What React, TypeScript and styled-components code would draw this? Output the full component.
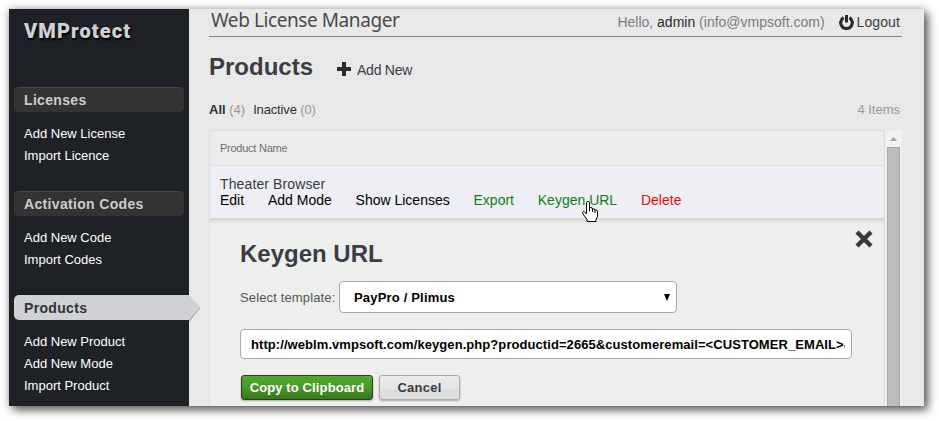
import React from "react";
import styled, { createGlobalStyle, css } from "styled-components";

const Global = createGlobalStyle`
  *, *::before, *::after { box-sizing: border-box; }
  body { margin: 0; background: #fff; font: 14px/16px "Liberation Sans", Arial, sans-serif; overflow: hidden; }
  a { color: inherit; text-decoration: none; }
`;

const Page = styled.div`
  height: 421px;
  padding: 9px 15px 15px 9px;
`;

const Window = styled.div`
  display: flex;
  height: 397px;
  box-shadow: 4px 4px 9px rgba(0, 0, 0, 0.6), 0 0 8px rgba(0, 0, 0, 0.25);
`;

const Sidebar = styled.nav`
  width: 180px;
  flex: none;
  background: #1e2126;
`;

const Logo = styled.div`
  height: 78px;
  padding: 10px 0 0 15px;
  color: #d0d1d4;
  font: 900 20px/24px Roboto, sans-serif;
  letter-spacing: 1.1px;
  text-shadow: 1px 2px 2px #000;
`;

const Section = styled.section`
  padding-bottom: 25px;
`;

const SectionTitle = styled.h3<{ $active?: boolean }>`
  position: relative;
  margin: 0 5px 10px;
  height: 25px;
  padding-left: 10px;
  border-radius: 5px;
  background: #333;
  border-top: 1px solid #464646;
  color: #ccc;
  font-size: 14px;
  line-height: 24px;
  letter-spacing: 0.33px;
  ${(p) =>
    p.$active &&
    css`
      margin-right: 0;
      border-radius: 5px 0 0 5px;
      border-top-color: #d0d1d5;
      background: #d0d1d5;
      color: #333;
    `}
`;

const Pointer = styled.svg`
  position: absolute;
  left: 100%;
  top: -1px;
`;

const SideLink = styled.a`
  display: block;
  height: 22px;
  padding: 1px 0 0 15px;
  color: #fff;
  font-size: 13px;
  line-height: 22px;
`;

const Main = styled.main`
  flex: 1;
  min-width: 0;
  padding: 0 22px 0 20px;
  background: linear-gradient(135deg, #f0f0f0 0 13%, #e6e6e6 13% 50%, #f0f0f0 50% 63%, #e6e6e6 63%) 0 0 / 4px 4px;
  display: flex;
  flex-direction: column;
`;

const TopBar = styled.header`
  display: flex;
  justify-content: space-between;
  height: 28px;
  border-bottom: 1px solid #848484;
`;

const AppName = styled.div`
  padding-left: 2px;
  color: #4b4b4b;
  font: 19px/23px "Noto Sans", sans-serif;
  letter-spacing: -0.42px;
`;

const Account = styled.div`
  display: flex;
  align-items: center;
  height: 26px;
  padding-right: 2px;
  color: #7b7b80;
  b { color: #28282c; font-weight: normal; }
`;

const Logout = styled.a`
  display: flex;
  align-items: center;
  gap: 3px;
  margin-left: 14px;
  color: #3c3c44;
  letter-spacing: 0.1px;
`;

const TitleRow = styled.div`
  display: flex;
  align-items: center;
  height: 60px;
`;

const Title = styled.h1`
  margin: 0;
  color: #3b3c45;
  font-size: 24px;
  line-height: 28px;
`;

const AddNew = styled.a`
  display: flex;
  align-items: center;
  gap: 5px;
  margin: 5px 0 0 24px;
  color: #3b3c45;
  letter-spacing: -0.25px;
  svg { margin-top: -2px; }
`;

const Filters = styled.div`
  display: flex;
  align-items: center;
  height: 24px;
  margin-bottom: 9px;
  padding: 2px 2px 0 0;
  color: #999;
  font-size: 13px;
`;

const Filter = styled.span<{ $bold?: boolean }>`
  margin-right: 8px;
  letter-spacing: ${(p) => (p.$bold ? 0 : -0.15)}px;
  a { color: #30303a; font-weight: ${(p) => (p.$bold ? "bold" : "normal")}; }
`;

const Count = styled.span`
  margin-left: auto;
`;

const ListArea = styled.div`
  display: flex;
  flex: 1;
  min-height: 0;
`;

const Table = styled.div`
  flex: 1;
  min-width: 0;
  border: 1px solid #dcdcdc;
  border-bottom: 0;
  background: #edefec;
  overflow: hidden;
`;

const HeadRow = styled.div`
  height: 35px;
  padding-left: 10px;
  border-bottom: 1px solid #dcdcdc;
  background: #ececec;
  color: #707070;
  font-size: 11px;
  line-height: 34px;
  letter-spacing: -0.25px;
`;

const ProductRow = styled.div`
  height: 53px;
  padding: 10px 0 0 10px;
  border-bottom: 1px solid #d9d9dc;
  background: #eeeff4;
  color: #3b3b42;
`;

const ProductName = styled.div`
  letter-spacing: 0.12px;
`;

const Actions = styled.div`
  display: flex;
  gap: 23.8px;
`;

const Action = styled.a<{ $tone?: string }>`
  position: relative;
  color: ${(p) => p.$tone ?? "#000"};
`;

const Cursor = styled.svg`
  position: absolute;
  left: 43px;
  top: 8px;
`;

const Panel = styled.div`
  height: 200px;
  padding: 21px 10px 0 30px;
  background: linear-gradient(#cfd0cf, #e4e6e3 2px, #edefec 7px);
`;

const PanelHead = styled.div`
  display: flex;
  justify-content: space-between;
  height: 41px;
`;

const Close = styled.svg`
  margin-top: -11px;
`;

const Field = styled.div`
  display: flex;
  align-items: center;
  color: #55555a;
`;

const Label = styled.span`
  width: 99px;
  padding-top: 2px;
  font-size: 13px;
  letter-spacing: 0.14px;
  white-space: nowrap;
`;

const Select = styled.div`
  display: flex;
  align-items: center;
  justify-content: space-between;
  width: 338px;
  height: 32px;
  padding: 2px 6px 0 14px;
  border: 1px solid #aaa;
  border-radius: 4px;
  background: #fff;
  color: #000;
  font-size: 13px;
  font-weight: bold;
  letter-spacing: 0.18px;
  svg { margin-top: -2px; }
`;

const UrlField = styled.div`
  width: 612px;
  height: 30px;
  margin: 16px 0;
  padding: 0 6px 0 10px;
  border: 1px solid #aaa;
  border-radius: 4px;
  background: #fff;
  color: #000;
  font-size: 13px;
  font-weight: bold;
  line-height: 30px;
  letter-spacing: 0.07px;
`;

const UrlText = styled.div`
  overflow: hidden;
  white-space: nowrap;
`;

const Buttons = styled.div`
  display: flex;
  gap: 6px;
  padding-left: 1px;
`;

const Button = styled.button<{ $primary?: boolean }>`
  width: ${(p) => (p.$primary ? 132 : 81)}px;
  height: 25px;
  padding: 0;
  border: 1px solid ${(p) => (p.$primary ? "#2b3f22" : "#aaabac")};
  border-radius: 3px;
  background: ${(p) =>
    p.$primary ? "linear-gradient(#50a82c, #4b9c27 45%, #367619)" : "linear-gradient(#ececed, #e2e5e7 58%, #dcdcdd 62%, #dedede)"};
  box-shadow: 0 1px 2px rgba(0, 0, 0, 0.3);
  color: ${(p) => (p.$primary ? "#fff" : "#3b3b42")};
  font: bold 13px/23px "Liberation Sans", Arial, sans-serif;
  letter-spacing: ${(p) => (p.$primary ? 0.12 : 0.25)}px;
  white-space: nowrap;
`;

const Scrollbar = styled.div`
  width: 17px;
  flex: none;
  display: flex;
  flex-direction: column;
  padding: 0 2px;
  background: #f1f1f1;
`;

const UpArrow = styled.svg`
  flex: none;
`;

const Thumb = styled.div`
  flex: 1;
  border: 1px solid #a8a8a8;
  border-bottom: 0;
  background: #bcbcbc;
`;

const sections = [
  { title: "Licenses", links: ["Add New License", "Import Licence"] },
  { title: "Activation Codes", links: ["Add New Code", "Import Codes"] },
  { title: "Products", links: ["Add New Product", "Add New Mode", "Import Product"], active: true },
];

const actions = [
  { label: "Edit" },
  { label: "Add Mode" },
  { label: "Show Licenses" },
  { label: "Export", tone: "#108010" },
  { label: "Keygen URL", tone: "#108010", hovered: true },
  { label: "Delete", tone: "#f00a0a" },
];

export default function App() {
  return (
    <>
      <Global />
      <Page>
        <Window>
          <Sidebar>
            <Logo>VMProtect</Logo>
            {sections.map((s) => (
              <Section key={s.title}>
                <SectionTitle $active={s.active}>
                  {s.title}
                  {s.active && (
                    <Pointer width="12" height="27">
                      <path d="M0 2 11 13.5 0 27Z" fill="#a5a5a9" />
                      <path d="M0 0 11 12.5 0 25Z" fill="#d0d1d5" />
                    </Pointer>
                  )}
                </SectionTitle>
                {s.links.map((l) => (
                  <SideLink key={l}>{l}</SideLink>
                ))}
              </Section>
            ))}
          </Sidebar>
          <Main>
            <TopBar>
              <AppName>Web License Manager</AppName>
              <Account>
                <span>
                  Hello, <b>admin</b> (info@vmpsoft.com)
                </span>
                <Logout>
                  <svg width="15" height="15" viewBox="0 0 15 15" fill="none" stroke="#2b2b2b">
                    <path d="M4.600 2.700A5.800 5.800 0 1 0 10.400 2.700" strokeWidth="3.200" />
                    <path d="M7.500 0V7.500" strokeWidth="3" />
                  </svg>
                  Logout
                </Logout>
              </Account>
            </TopBar>
            <TitleRow>
              <Title>Products</Title>
              <AddNew>
                <svg width="15" height="14">
                  <path d="M5 0h4v5h5v4H9v5H5V9H0V5h5z" fill="#2b2b2b" />
                </svg>
                Add New
              </AddNew>
            </TitleRow>
            <Filters>
              <Filter $bold>
                <a>All</a> (4)
              </Filter>
              <Filter>
                <a>Inactive</a> (0)
              </Filter>
              <Count>4 Items</Count>
            </Filters>
            <ListArea>
              <Table>
                <HeadRow>Product Name</HeadRow>
                <ProductRow>
                  <ProductName>Theater Browser</ProductName>
                  <Actions>
                    {actions.map((a) => (
                      <Action key={a.label} $tone={a.tone}>
                        {a.label}
                        {a.hovered && (
                          <Cursor width="18" height="23" viewBox="0 0 18 23">
                            <path
                              d="M5.500 14V2.500q0-1 1.500-1t1.500 1V8l1-.5q2 0 2 1.500 2.500-.5 2.500 1 2.500-.5 2.500 1.500v5l-1.500 3v2h-9v-2l-4-5.500q-1-2.500.5-2.500 1 0 2 1.500zM8.500 8v3.500M11.500 9v3M14 10v3"
                              fill="#fff"
                              stroke="#000"
                            />
                          </Cursor>
                        )}
                      </Action>
                    ))}
                  </Actions>
                </ProductRow>
                <Panel>
                  <PanelHead>
                    <Title as="h2">Keygen URL</Title>
                    <Close width="20" height="20" viewBox="0 0 20 20">
                      <path d="M3 3l14 14M17 3l-14 14" stroke="#383838" strokeWidth="4.500" />
                    </Close>
                  </PanelHead>
                  <Field>
                    <Label>Select template:</Label>
                    <Select>
                      PayPro / Plimus
                      <svg width="6" height="7">
                        <path d="M0 0h6L3 7z" />
                      </svg>
                    </Select>
                  </Field>
                  <UrlField>
                    <UrlText>
                      {"http://weblm.vmpsoft.com/keygen.php?productid=2665&customeremail=<CUSTOMER_EMAIL>&"}
                    </UrlText>
                  </UrlField>
                  <Buttons>
                    <Button $primary>Copy to Clipboard</Button>
                    <Button>Cancel</Button>
                  </Buttons>
                </Panel>
              </Table>
              <Scrollbar>
                <UpArrow width="13" height="17">
                  <path d="M3 11h7L6.500 7z" fill="#a0a0a0" />
                </UpArrow>
                <Thumb />
              </Scrollbar>
            </ListArea>
          </Main>
        </Window>
      </Page>
    </>
  );
}
